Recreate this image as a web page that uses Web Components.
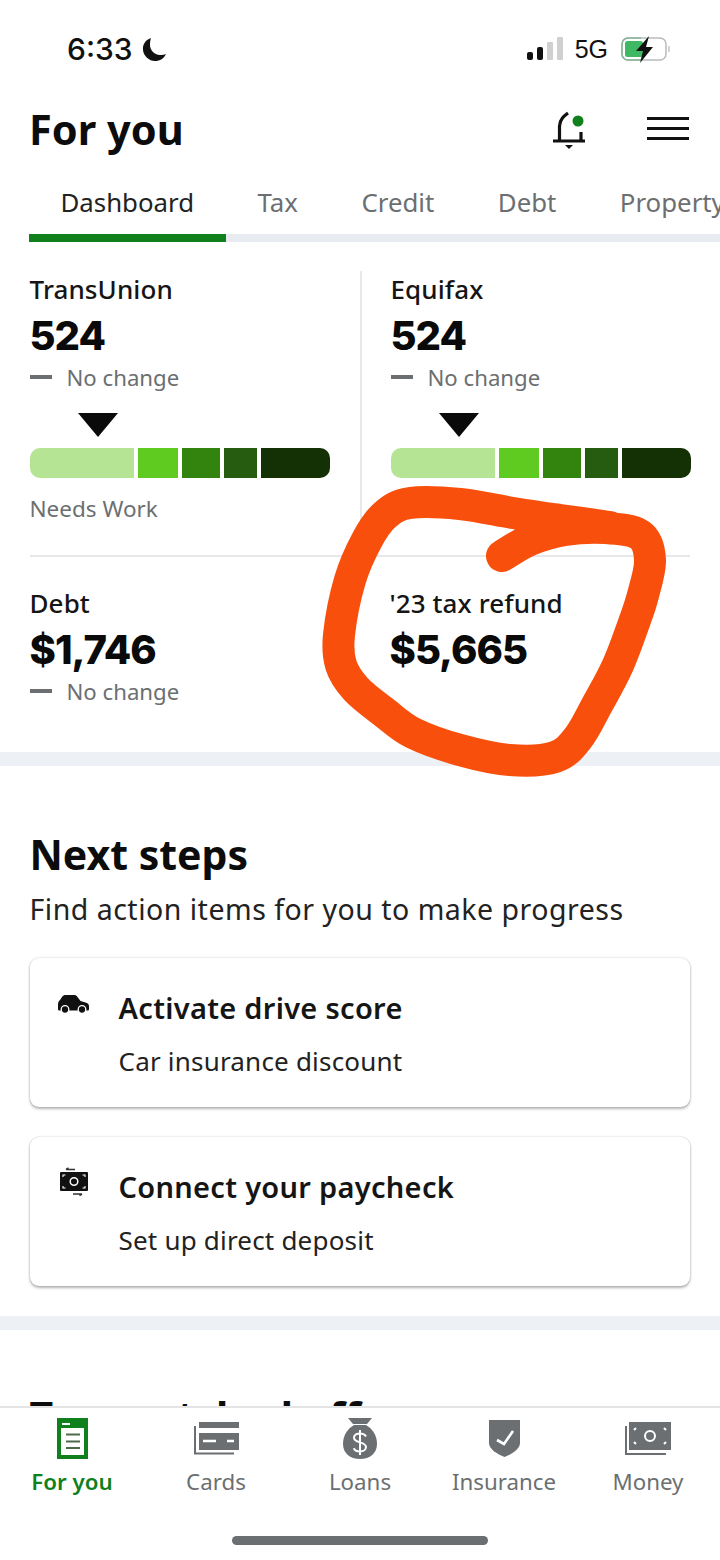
<!doctype html>
<html>
<head>
<meta charset="utf-8">
<style>
  html, body { margin: 0; padding: 0; background: #fff; }
  body { font-family: "Noto Sans", sans-serif; color: #111; }
</style>
</head>
<body>
<app-shell>
  <status-bar></status-bar>
  <page-header title="For you"></page-header>
  <tab-strip tabs="Dashboard,Tax,Credit,Debt,Property"></tab-strip>
  <main-scroll>
    <stat-row class="first">
      <stat-cell name="TransUnion" value="524" change="No change" meter="1" note="Needs Work"></stat-cell>
      <stat-cell name="Equifax" value="524" change="No change" meter="1" divided></stat-cell>
    </stat-row>
    <stat-row class="second">
      <stat-cell name="Debt" value="$1,746" change="No change"></stat-cell>
      <stat-cell name="'23 tax refund" value="$5,665"></stat-cell>
    </stat-row>
    <band-line></band-line>
    <next-steps heading="Next steps" sub="Find action items for you to make progress">
      <step-card icon="car" title="Activate drive score" sub="Car insurance discount"></step-card>
      <step-card icon="cash" title="Connect your paycheck" sub="Set up direct deposit"></step-card>
    </next-steps>
    <band-line></band-line>
    <next-steps heading="Top matched offers" clipped></next-steps>
    <scribble-mark></scribble-mark>
  </main-scroll>
  <bottom-nav>
    <nav-item icon="doc" label="For you" active></nav-item>
    <nav-item icon="cards" label="Cards"></nav-item>
    <nav-item icon="bag" label="Loans"></nav-item>
    <nav-item icon="shield" label="Insurance"></nav-item>
    <nav-item icon="money" label="Money"></nav-item>
  </bottom-nav>
</app-shell>

<script>
var GRAY = '#6c6f71';
var GREEN = '#10801c';

var ICONS = {
  car: `<svg width="31" height="19" viewBox="0 0 31 19"><path fill="#111" d="M0 14V9c0-2 1-3 2-4l2-3c1-1.500 2-2 4-2h8c1.500 0 2.500 .5 3.500 2l3 4 5 1.500c2 .5 3.500 1.500 3.500 3.500v3c0 1-.5 1.500-1.500 1.500H1.500C.5 15.500 0 15 0 14z"/><circle cx="7" cy="14.500" r="3.800" fill="#111" stroke="#fff" stroke-width="1.300"/><circle cx="24" cy="14.500" r="3.800" fill="#111" stroke="#fff" stroke-width="1.300"/></svg>`,
  cash: `<svg width="28" height="30" viewBox="0 0 28 30"><rect x="0" y="5" width="28" height="19" rx="1" fill="#111"/><circle cx="14" cy="14.500" r="3.800" fill="none" stroke="#fff" stroke-width="1.500"/><path d="M3 10V8h2.500M25 10V8h-2.500M3 19v2h2.500M25 19v2h-2.500" fill="none" stroke="#fff" stroke-width="1.100"/><path d="M6 2.500h9M6 2.500l2.500-1.500M13 27h9M22 27l-2.500 1.500" fill="none" stroke="#333" stroke-width="1.500"/></svg>`,
  doc: `<svg width="31" height="41" viewBox="0 0 31 41"><rect width="31" height="41" fill="${GREEN}"/><rect x="4" y="10" width="23" height="27" fill="#fff"/><rect x="5" y="5" width="8" height="2" fill="#fff"/><path d="M9 16.500h14M9 23.500h14M9 30h14" stroke="#4d6b4d" stroke-width="2.200"/></svg>`,
  cards: `<svg width="45" height="34" viewBox="0 0 45 34"><path d="M1 5v27.500h39" fill="none" stroke="${GRAY}" stroke-width="2"/><rect x="5" y="1" width="40" height="6" fill="${GRAY}"/><rect x="5" y="12" width="40" height="17" fill="${GRAY}"/><path d="M9 20h13M33 20h7" stroke="#fff" stroke-width="2.500"/></svg>`,
  bag: `<svg width="34" height="41" viewBox="0 0 34 41"><path fill="${GRAY}" d="M5 0h24l-5 6H10z"/><path fill="${GRAY}" d="M11 7h12c7 4 11 11 11 19 0 9-7 15-17 15S0 35 0 26C0 18 4 11 11 7z"/><path d="M23 18.500c-1-2-3.200-3-6-3-3.500 0-6 1.700-6 4.300 0 5.700 12 3.400 12 9.200 0 2.700-2.500 4.500-6 4.500-3 0-5.200-1.200-6.300-3.300M17 12v25" fill="none" stroke="#fff" stroke-width="2"/></svg>`,
  shield: `<svg width="31" height="37" viewBox="0 0 31 37"><path fill="${GRAY}" d="M0 0h31v23c0 6-8 11-15.500 14C8 34 0 29 0 23z"/><path d="M8 20l7 4 9-13" fill="none" stroke="#fff" stroke-width="2.600"/></svg>`,
  money: `<svg width="46" height="33" viewBox="0 0 46 33"><path d="M1 4v28h40" fill="none" stroke="${GRAY}" stroke-width="2"/><rect x="4" y="0" width="42" height="28" fill="${GRAY}"/><circle cx="25" cy="14" r="5" fill="none" stroke="#fff" stroke-width="2"/><path d="M9 8l2-2M41 8l-2-2M9 20l2 2M41 20l-2 2" stroke="#fff" stroke-width="2"/></svg>`
};

// small helper so each class only writes its css + markup
function mount(el, css, markup) {
  var root = el.attachShadow({ mode: 'open' });
  root.innerHTML = '<style>' + css + '</style>' + markup;
  return root;
}

// catmull-rom through the points, so the scribble stays smooth
function smoothPath(pts) {
  var d = 'M' + pts[0][0] + ' ' + pts[0][1];
  for (var i = 0; i < pts.length - 1; i++) {
    var p0 = pts[i - 1] || pts[i], p1 = pts[i], p2 = pts[i + 1], p3 = pts[i + 2] || p2;
    d += 'C' + (p1[0] + (p2[0] - p0[0]) / 6).toFixed(1) + ' ' + (p1[1] + (p2[1] - p0[1]) / 6).toFixed(1) + ' ' +
      (p2[0] - (p3[0] - p1[0]) / 6).toFixed(1) + ' ' + (p2[1] - (p3[1] - p1[1]) / 6).toFixed(1) + ' ' + p2[0] + ' ' + p2[1];
  }
  return d;
}

class AppShell extends HTMLElement {
  connectedCallback() {
    mount(this, `:host { display: flex; flex-direction: column; width: 720px; height: 1560px; overflow: hidden; background: #fff; }`, `<slot></slot>`);
  }
}

class StatusBar extends HTMLElement {
  connectedCallback() {
    mount(this, `
      :host { display: flex; align-items: center; height: 98px; padding: 0 49px 0 67px; box-sizing: border-box; font-family: "Liberation Sans", sans-serif; color: #111; }
      .time { font-family: "Inter", sans-serif; font-size: 30px; font-weight: 500; }
      .moon { margin-left: 9px; }
      .right { margin-left: auto; display: flex; align-items: center; }
      .net { font-size: 25px; margin: 0 13px 0 12px; }
    `, `
      <span class="time">6:33</span>
      <svg class="moon" width="25" height="25" viewBox="0 0 25 25"><path fill="#111" d="M9 1c-6 2-8.500 7-8 12 .5 6 6 11 12 11 5 0 9-2.500 11-7-2 1-4 1.300-6 1-6-.5-10-5-10-10 0-3 .3-5 1-7z"/></svg>
      <span class="right">
        <svg width="36" height="24" viewBox="0 0 36 24"><rect x="0" y="15" width="6" height="8" rx="2" fill="#111"/><rect x="10" y="10" width="6" height="13" rx="2" fill="#111"/><rect x="20" y="5" width="6" height="18" rx="1" fill="#d0d0d0"/><rect x="30" y="0" width="6" height="23" rx="1" fill="#d0d0d0"/></svg>
        <span class="net">5G</span>
        <svg width="50" height="27" viewBox="0 0 50 27"><rect x="1" y="2" width="44" height="22" rx="6" fill="#fff" stroke="#b9bbbc" stroke-width="1.500"/><path d="M20 2H7a6 6 0 0 0-6 6v10a6 6 0 0 0 6 6h13" fill="none" stroke="#8ab59a" stroke-width="1.500"/><rect x="4" y="5" width="18" height="16" rx="2.500" fill="#3fb863"/><path d="M48 10v6" stroke="#c4c6c7" stroke-width="1.500"/><path fill="#111" d="M28 0L15 15h7l-3 12 13-16h-7z"/></svg>
      </span>
    `);
  }
}

class PageHeader extends HTMLElement {
  connectedCallback() {
    mount(this, `
      :host { display: flex; align-items: center; height: 64px; padding: 0 31px 0 29px; }
      h1 { margin: -3px 0 0; font-size: 41.500px; font-weight: 700; color: #0c0c0c; }
      .bell { margin-left: auto; }
      .menu { margin-left: 61px; display: flex; flex-direction: column; gap: 7px; margin-top: -3px; }
      .menu i { display: block; width: 42px; height: 3px; background: #111; }
    `, `
      <h1>${this.getAttribute('title')}</h1>
      <svg class="bell" width="34" height="40" viewBox="0 0 34 40"><path d="M16 3C12 6 8 9 7.500 16V30M1 31H33M29 22V30" fill="none" stroke="#111" stroke-width="3.200"/><path d="M13 35h8l-4 4z" fill="#111"/><circle cx="26" cy="11" r="5.500" fill="${GREEN}"/></svg>
      <span class="menu"><i></i><i></i><i></i></span>
    `);
  }
}

class TabStrip extends HTMLElement {
  connectedCallback() {
    var tabs = this.getAttribute('tabs').split(',');
    var items = tabs.map(function (t, i) {
      return '<span class="tab' + (i == 0 ? ' on' : '') + '">' + t + '</span>';
    }).join('');
    mount(this, `
      :host { display: block; height: 80px; overflow: hidden; margin-left: 29px; }
      .row { display: flex; height: 80px; box-sizing: border-box; border-bottom: 8px solid #e8ecf0; white-space: nowrap; }
      .tab { display: block; flex: none; height: 80px; box-sizing: border-box; padding: 20px 32px 0 31.500px; font-size: 25.800px; line-height: 40px; color: #6c6f71; border-bottom: 8px solid transparent; }
      .tab.on { color: #222; border-bottom-color: ${GREEN}; }
    `, `<div class="row">${items}</div>`);
  }
}

class MainScroll extends HTMLElement {
  connectedCallback() {
    mount(this, `:host { display: block; position: relative; flex: 1; min-height: 0; overflow: hidden; }`, `<slot></slot>`);
  }
}

class StatRow extends HTMLElement {
  connectedCallback() {
    var first = this.classList.contains('first');
    mount(this, `
      :host { display: grid; grid-template-columns: 360px 360px; box-sizing: border-box; }
      :host(.first) { padding: 29px 0 30px; }
      :host(.second) { padding-top: 30px; height: 197px; position: relative; }
      .rule { position: absolute; left: 30px; right: 30px; top: 0; height: 2px; background: #e6e8ea; }
    `, (first ? '' : '<span class="rule"></span>') + `<slot></slot>`);
  }
}

class StatCell extends HTMLElement {
  connectedCallback() {
    var change = this.getAttribute('change');
    var note = this.getAttribute('note');
    var meter = this.hasAttribute('meter');
    mount(this, `
      :host { display: block; padding-left: 29.500px; box-sizing: border-box; }
      :host([divided]) { border-left: 2px solid #e6e8ea; padding-left: 28.500px; }
      .name { font-size: 26px; line-height: 36px; font-weight: 500; color: #151515; letter-spacing: .1px; }
      .value { margin-top: 3px; font-family: "Inter", sans-serif; font-size: 40px; line-height: 52px; font-weight: 800; color: #0a0a0a; letter-spacing: -1px; }
      .change { display: flex; align-items: center; height: 32px; margin-top: -1px; font-size: 22.200px; color: #6c6f71; }
      .change i { display: block; width: 22px; height: 4px; background: #6c6f71; margin-right: 15px; }
      .tri { width: 0; height: 0; margin: 20px 0 11px 48px; border: solid transparent; border-width: 24px 20px 0; border-top-color: #0a0a0a; }
      .bar { display: flex; gap: 4px; width: 300px; height: 30px; }
      .bar span { display: block; }
      .note { margin-top: 15px; height: 32px; line-height: 32px; font-size: 22.500px; color: #6c6f71; }
    `, `
      <div class="name">${this.getAttribute('name')}</div>
      <div class="value">${this.getAttribute('value')}</div>
      ${change ? `<div class="change"><i></i>${change}</div>` : ''}
      ${meter ? `<div class="tri"></div>
      <div class="bar">
        <span style="width:104px;background:#b5e494;border-radius:10px 0 0 10px"></span>
        <span style="width:40px;background:#5fcb20"></span>
        <span style="width:38px;background:#33840e"></span>
        <span style="width:33px;background:#255c10"></span>
        <span style="width:69px;background:#143005;border-radius:0 10px 10px 0"></span>
      </div>` : ''}
      ${meter ? `<div class="note">${note || '&nbsp;'}</div>` : ''}
    `);
  }
}

class BandLine extends HTMLElement {
  connectedCallback() {
    mount(this, `:host { display: block; height: 14px; background: #edf0f4; }`, ``);
  }
}

class NextSteps extends HTMLElement {
  connectedCallback() {
    var sub = this.getAttribute('sub');
    mount(this, `
      :host { display: block; padding: 65px 30px 30px 29.500px; }
      :host([clipped]) { padding-top: 63px; }
      h2 { margin: 0; font-size: 41px; line-height: 46px; font-weight: 700; color: #0c0c0c; white-space: nowrap; }
      :host([clipped]) h2 { height: 13px; overflow: hidden; }
      p { margin: 13px 0 30px; font-size: 28.500px; line-height: 38px; letter-spacing: .5px; color: #222; }
      .cards { display: flex; flex-direction: column; gap: 30px; margin-left: .5px; }
    `, `
      <h2>${this.getAttribute('heading')}</h2>
      ${sub ? `<p>${sub}</p>` : ''}
      <div class="cards"><slot></slot></div>
    `);
  }
}

class StepCard extends HTMLElement {
  connectedCallback() {
    mount(this, `
      :host { display: grid; grid-template-columns: 88.500px 1fr; height: 149px; box-sizing: border-box; padding-top: 32px; border-radius: 9px; background: #fff; box-shadow: 0 0 2px rgba(0,0,0,.22), 0 2px 3px rgba(0,0,0,.28); }
      .icon { padding: 1px 0 0 30px; }
      :host([icon=car]) .icon { padding: 5px 0 0 28px; }
      :host([icon=cash]) .icon { margin-top: -3px; }
      .title { font-size: 29px; line-height: 36px; font-weight: 600; letter-spacing: .3px; color: #151515; }
      .sub { margin-top: 17px; font-size: 26px; line-height: 36px; letter-spacing: .2px; color: #222; }
    `, `
      <div class="icon">${ICONS[this.getAttribute('icon')]}</div>
      <div>
        <div class="title">${this.getAttribute('title')}</div>
        <div class="sub">${this.getAttribute('sub')}</div>
      </div>
    `);
  }
}

class ScribbleMark extends HTMLElement {
  connectedCallback() {
    // hand drawn circle over the refund stat, points are page coords (main-scroll starts at y 242)
    var pts = [[502,556],[530,540],[565,530],[605,528],[640,535],[650,560],[643,595],[635,620],[618,665],[597,705],[578,738],[555,757],[510,760],[460,750],[413,733],[385,713],[356,689],[341,665],[339,635],[350,580],[367,540],[385,515],[410,503],[460,504],[513,513],[560,520],[610,527]];
    mount(this, `
      :host { position: absolute; left: 0; top: -242px; width: 720px; height: 1000px; pointer-events: none; }
      svg { display: block; }
    `, `<svg width="720" height="1000" viewBox="0 0 720 1000"><path fill="none" stroke="#f94f0c" stroke-width="32" stroke-linecap="round" stroke-linejoin="round" d="${smoothPath(pts)}"/></svg>`);
  }
}

class BottomNav extends HTMLElement {
  connectedCallback() {
    mount(this, `
      :host { display: block; flex: none; height: 154px; box-sizing: border-box; border-top: 2px solid #e4e4e4; background: #fff; }
      .items { display: grid; grid-template-columns: repeat(5, 144px); padding-top: 8px; }
      .home { width: 256px; height: 9px; margin: 39px auto 0; border-radius: 5px; background: #6c6f71; }
    `, `<div class="items"><slot></slot></div><div class="home"></div>`);
  }
}

class NavItem extends HTMLElement {
  connectedCallback() {
    mount(this, `
      :host { display: flex; flex-direction: column; align-items: center; color: #6c6f71; font-size: 22.300px; }
      :host([active]) { color: ${GREEN}; font-weight: 600; }
      .ico { display: flex; align-items: center; justify-content: center; height: 44px; }
      .lbl { margin-top: 7px; line-height: 30px; }
    `, `<div class="ico">${ICONS[this.getAttribute('icon')]}</div><div class="lbl">${this.getAttribute('label')}</div>`);
  }
}

customElements.define('app-shell', AppShell);
customElements.define('status-bar', StatusBar);
customElements.define('page-header', PageHeader);
customElements.define('tab-strip', TabStrip);
customElements.define('main-scroll', MainScroll);
customElements.define('stat-row', StatRow);
customElements.define('stat-cell', StatCell);
customElements.define('band-line', BandLine);
customElements.define('next-steps', NextSteps);
customElements.define('step-card', StepCard);
customElements.define('scribble-mark', ScribbleMark);
customElements.define('bottom-nav', BottomNav);
customElements.define('nav-item', NavItem);
</script>
</body>
</html>
